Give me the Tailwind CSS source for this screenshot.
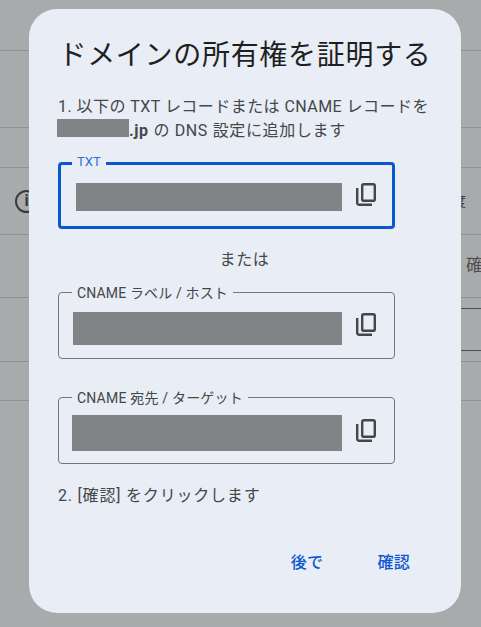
<!DOCTYPE html>
<html lang="ja">
<head>
  <meta charset="UTF-8" />
  <meta name="viewport" content="width=device-width, initial-scale=1.0"/>
  <title>ドメインの所有権を証明する</title>
  <script src="https://cdn.jsdelivr.net/npm/@tailwindcss/browser@4"></script>
</head>
<body class="relative h-[627px] w-[481px] overflow-hidden bg-[#a9aaab] font-['Roboto','Noto_Sans_CJK_JP',sans-serif] text-[#444746]">
  <!-- Page behind the scrim -->
  <div class="flex flex-col">
    <div class="h-[51px] border-b border-[#909191]"></div>
    <div class="h-[77px] border-b border-[#909191]"></div>
    <div class="h-[40px] border-b border-[#909191]"></div>
    <div class="flex h-[67px] items-center justify-between border-b border-[#909191]">
      <div class="ml-[15px] flex size-[23px] items-center justify-center rounded-full border-[2.5px] border-[#3a3b3c] text-[16px] font-bold leading-none text-[#3a3b3c]">i</div>
      <span class="mr-[15px] text-[14px] text-[#3a3b3c]">度</span>
    </div>
    <div class="flex h-[63px] items-center justify-start border-b border-[#909191] pl-[466px]">
      <span class="whitespace-nowrap text-[17px] text-[#4d4e4f]">確認</span>
    </div>
    <div class="h-[64px] border-b border-[#909191] pt-[10px]">
      <div class="ml-[440px] h-[43px] border-y border-[#4d4e4f]"></div>
    </div>
    <div class="h-[39px] border-b border-[#909191]"></div>
  </div>

  <!-- Dialog -->
  <div class="absolute left-[29px] top-[9px] flex h-[604px] w-[432px] flex-col rounded-[28px] bg-[#e8edf6]">
    <h1 class="mt-[29px] whitespace-nowrap text-center text-[28px] font-normal leading-[36px] tracking-[0.7px] text-[#1f1f1f]">ドメインの所有権を証明する</h1>

    <div class="px-[29px]">
      <p class="mt-[21px] whitespace-nowrap text-[16px] leading-[24px]"><span class="tracking-[0.45px]">1. 以下の TXT レコードまたは CNAME レコードを</span><br><span class="ml-[-1px] inline-block h-[18px] w-[72px] bg-[#828387] align-top"></span><span class="tracking-[0.65px]"><span class="font-bold">.jp</span> の DNS 設定に追加します</span></p>

      <div class="relative mt-[19px] flex h-[67px] w-[337px] items-start rounded-[4px] border-[3px] border-[#0b57d0]">
        <span class="absolute left-[11px] top-[-12px] bg-[#e8edf6] px-[5px] text-[13px] leading-[18px] text-[#2f6fd6]">TXT</span>
        <div class="ml-[15px] mt-[18px] h-[28px] w-[266px] bg-[#828387]"></div>
        <svg class="ml-[13px] mt-[18px]" width="24" height="24" viewBox="0 0 24 24" fill="none" stroke="#444746" stroke-width="2.4"><rect x="7.2" y="1.2" width="12.6" height="16.6" rx="1.6"/><path d="M2.2 5v15a1.8 1.8 0 0 0 1.8 1.8h13"/></svg>
      </div>

      <p class="mt-[19px] w-[374px] pr-[1px] text-center text-[16px] leading-[24px] tracking-[0.7px]">または</p>

      <div class="relative mt-[20px] flex h-[67px] w-[337px] items-start rounded-[4px] border border-[#747775]">
        <span class="absolute left-[13px] top-[-9px] whitespace-nowrap bg-[#e8edf6] px-[5px] text-[14px] leading-[18px] tracking-[0.15px]">CNAME ラベル / ホスト</span>
        <div class="ml-[14px] mt-[19px] h-[33px] w-[269px] bg-[#828387]"></div>
        <svg class="ml-[13px] mt-[20px]" width="24" height="24" viewBox="0 0 24 24" fill="none" stroke="#444746" stroke-width="2.4"><rect x="7.2" y="1.2" width="12.6" height="16.6" rx="1.6"/><path d="M2.2 5v15a1.8 1.8 0 0 0 1.8 1.8h13"/></svg>
      </div>

      <div class="relative mt-[38px] flex h-[67px] w-[337px] items-start rounded-[4px] border border-[#747775]">
        <span class="absolute left-[13px] top-[-9px] whitespace-nowrap bg-[#e8edf6] px-[5px] text-[14px] leading-[18px] tracking-[0.2px]">CNAME 宛先 / ターゲット</span>
        <div class="ml-[13px] mt-[17px] h-[36px] w-[270px] bg-[#828387]"></div>
        <svg class="ml-[13px] mt-[21px]" width="24" height="24" viewBox="0 0 24 24" fill="none" stroke="#444746" stroke-width="2.4"><rect x="7.2" y="1.2" width="12.6" height="16.6" rx="1.6"/><path d="M2.2 5v15a1.8 1.8 0 0 0 1.8 1.8h13"/></svg>
      </div>

      <p class="mt-[20px] text-[16px] leading-[24px] tracking-[0.8px]">2. [確認] をクリックします</p>
    </div>

    <div class="mt-[43px] flex justify-end gap-[30px] pr-[39px] text-[16px] font-medium leading-[24px] tracking-[0.3px] text-[#0b57d0]">
      <button type="button" class="px-[12px]">後で</button>
      <button type="button" class="px-[12px]">確認</button>
    </div>
  </div>
</body>
</html>
